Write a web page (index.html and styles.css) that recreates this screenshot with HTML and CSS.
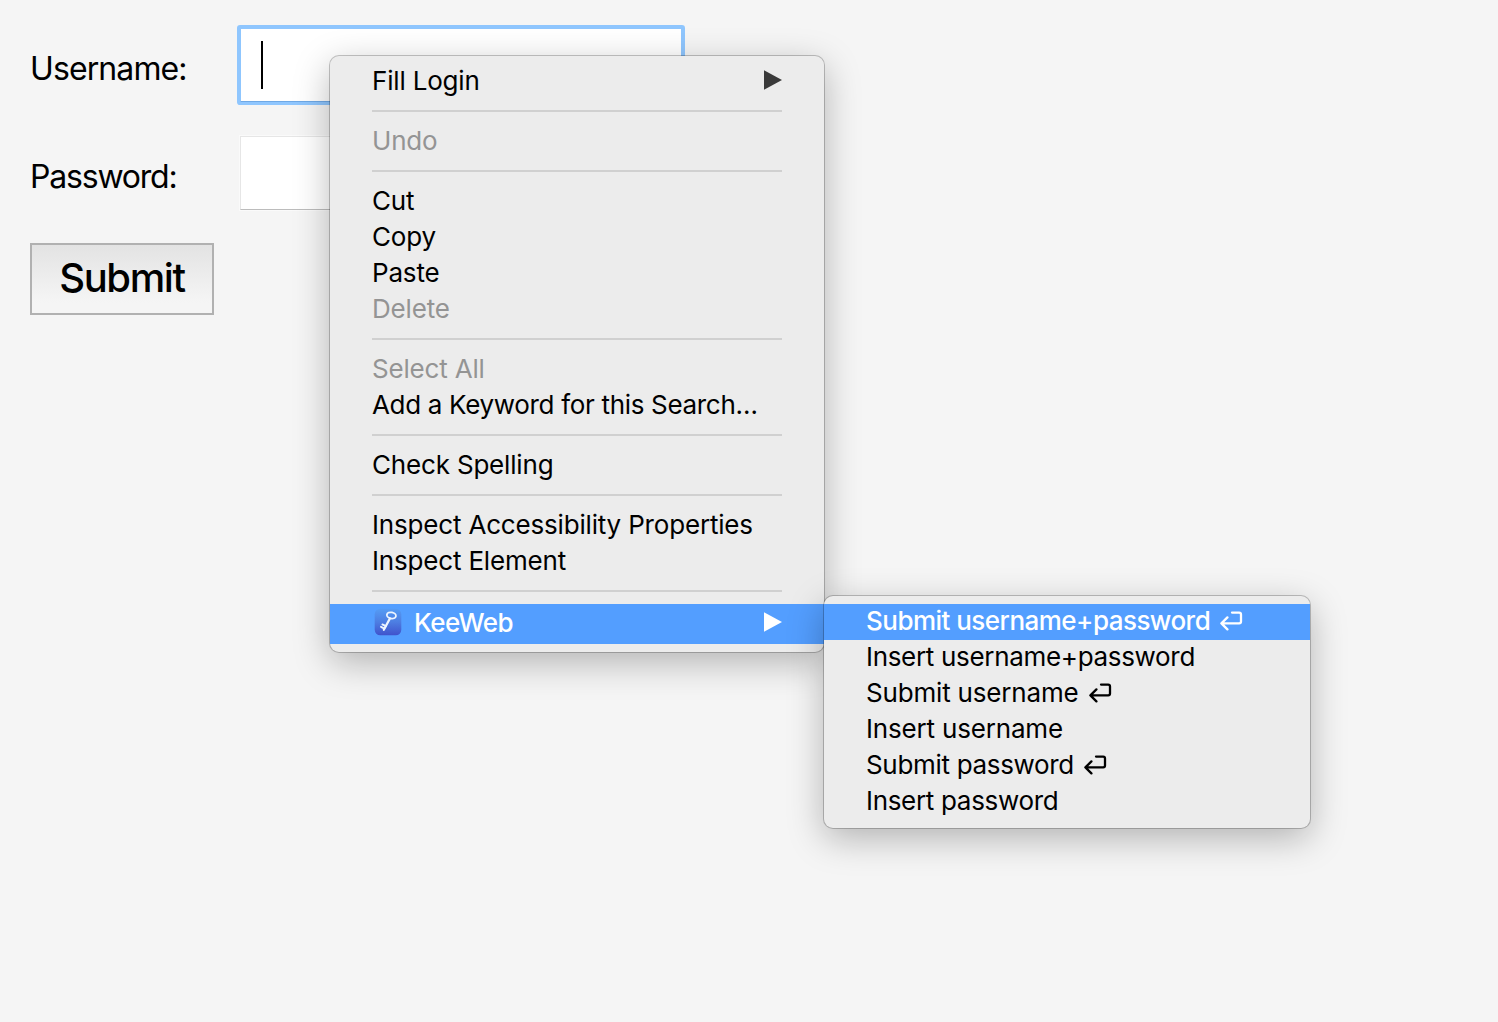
FILE: index.html
```html
<!DOCTYPE html>
<html lang="en">
<head>
<meta charset="utf-8">
<title>Login</title>
<link rel="stylesheet" href="styles.css">
</head>
<body>
<svg class="defs" aria-hidden="true">
  <symbol id="return" viewBox="0 0 24 20"><path d="M13 1.6h7.2q1.8 0 1.8 1.8v7.2q0 1.8-1.8 1.8H2.4M8.4 6.4l-6 6 6 6" fill="none" stroke="currentColor" stroke-width="2.3" stroke-linecap="round" stroke-linejoin="round"/></symbol>
  <symbol id="arrow" viewBox="0 0 18 20"><path d="M0 .3v19.4L18 10z" fill="currentColor"/></symbol>
</svg>
<form class="login">
  <div class="row"><label class="label user-label" for="user">Username:</label><div class="field focused" id="user"><span class="caret"></span></div></div>
  <div class="row"><label class="label pass-label" for="pass">Password:</label><div class="field" id="pass"></div></div>
  <button class="submit" type="button">Submit</button>
</form>

<div class="menu main-menu">
  <div class="item"><span>Fill Login</span><svg class="arrow"><use href="#arrow"/></svg></div>
  <div class="sep"></div>
  <div class="item disabled"><span>Undo</span></div>
  <div class="sep"></div>
  <div class="item"><span>Cut</span></div>
  <div class="item"><span>Copy</span></div>
  <div class="item"><span>Paste</span></div>
  <div class="item disabled"><span>Delete</span></div>
  <div class="sep"></div>
  <div class="item disabled"><span>Select All</span></div>
  <div class="item snug"><span>Add a Keyword for this Search…</span></div>
  <div class="sep"></div>
  <div class="item"><span>Check Spelling</span></div>
  <div class="sep"></div>
  <div class="item"><span>Inspect Accessibility Properties</span></div>
  <div class="item"><span>Inspect Element</span></div>
  <div class="sep"></div>
  <div class="item active tall">
    <svg class="app-icon" viewBox="0 0 28 28">
      <defs><linearGradient id="tile" x1="0" y1="0" x2="0" y2="1"><stop offset="0" stop-color="#559cf4"/><stop offset=".5" stop-color="#4d7ee2"/><stop offset="1" stop-color="#4053cc"/></linearGradient></defs>
      <rect x=".7" y=".7" width="26.6" height="26.6" rx="5.5" fill="url(#tile)"/>
      <g fill="none" stroke="#eef6ff" stroke-linecap="round"><ellipse cx="17.4" cy="7.4" rx="4.6" ry="3" transform="rotate(12 17.4 7.4)" stroke-width="1.8"/><path d="M16 10.4L9.8 21.8" stroke-width="2.2"/><path d="M11.8 18.2L8.4 16.4M10.4 20.6L7 18.8" stroke-width="1.9"/></g>
    </svg>
    <span>KeeWeb</span><svg class="arrow"><use href="#arrow"/></svg>
  </div>
</div>

<div class="menu sub-menu">
  <div class="item active"><span>Submit username+password</span><svg class="return"><use href="#return"/></svg></div>
  <div class="item snug"><span>Insert username+password</span></div>
  <div class="item"><span>Submit username</span><svg class="return"><use href="#return"/></svg></div>
  <div class="item"><span>Insert username</span></div>
  <div class="item snug"><span>Submit password</span><svg class="return"><use href="#return"/></svg></div>
  <div class="item snug"><span>Insert password</span></div>
</div>
</body>
</html>
```
FILE: styles.css
```css
* { box-sizing: border-box; }
body {
  margin: 0;
  min-height: 1022px;
  background: #f5f5f5;
  color: #000;
  font-family: Inter, "Liberation Sans", sans-serif;
}
.defs { display: none; }
.login { padding: 28px 0 0 30px; }
.row { display: flex; height: 74px; margin-bottom: 34px; }
.label {
  width: 210px;
  padding-top: 4px;
  font-size: 32px;
  line-height: 74px;
  font-weight: 380;
}
.user-label { letter-spacing: -0.9px; }
.pass-label { letter-spacing: -1.2px; }
.field {
  width: 442px;
  height: 74px;
  padding: 13px 20px;
  background: #fff;
  border: 1px solid #e6e6e6;
  border-bottom-color: #bcbcbc;
  box-shadow: 0 0 0 1px #fafafa;
}
.focused {
  border-color: #8fc6fe #8fc6fe #6fa9e6;
  box-shadow: 0 0 0 3px #8fc6fe;
  border-radius: 1px;
}
.caret { display: block; width: 2px; height: 48px; margin-top: -1px; background: #000; }
.submit {
  display: block;
  width: 184px;
  height: 72px;
  margin-top: -1px;
  padding: 0 0 2px;
  border: 2px solid #b1b1b1;
  background: linear-gradient(#e3e3e3, #f5f5f5 85%);
  color: #000;
  font: 450 40px/66px Inter, "Liberation Sans", sans-serif;
  letter-spacing: -1.4px;
}
.menu {
  position: absolute;
  padding: 8px 0;
  background: #ececec;
  border-radius: 9px;
  box-shadow: 0 0 0 1px rgba(0, 0, 0, .22), 0 10px 36px rgba(0, 0, 0, .28);
}
.main-menu { left: 330px; top: 56px; width: 494px; }
.sub-menu { left: 824px; top: 596px; width: 486px; }
.item {
  display: flex;
  align-items: center;
  height: 36px;
  padding: 0 42px 2px;
  font-size: 26px;
  font-weight: 420;
  line-height: 34px;
  letter-spacing: -0.18px;
  white-space: nowrap;
}
.snug { letter-spacing: -0.32px; }
.tall { height: 40px; }
.disabled { color: #949494; }
.active { background: #539eff; color: #fff; font-weight: 500; letter-spacing: -0.53px; }
.sep { height: 24px; padding: 10px 42px 12px; }
.sep::before { content: ""; display: block; height: 2px; background: #d0d0d0; }
.arrow { width: 18px; height: 20px; margin: 0 0 2px auto; color: #3a3a3a; }
.active .arrow { color: #fff; }
.return { width: 24px; height: 20px; margin: 0 0 1px 9px; }
.app-icon { width: 28px; height: 28px; margin: 0 12px 2px 2px; }
```
